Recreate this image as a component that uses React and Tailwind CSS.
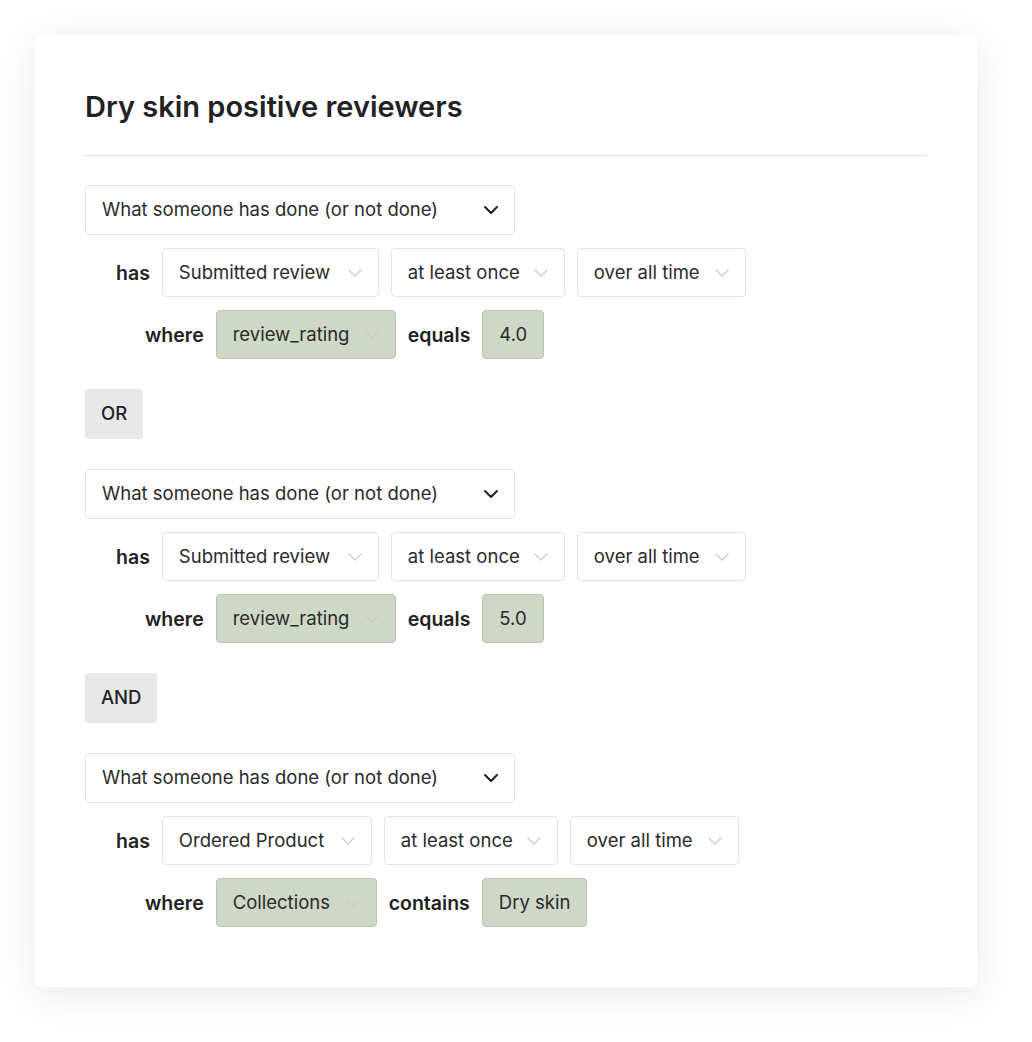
import React from 'react';

function Chevron({ dark }) {
  return (
    <svg
      width="14"
      height="8"
      viewBox="0 0 14 8"
      fill="none"
      stroke={dark ? '#222222' : '#c9ccc9'}
      strokeWidth={dark ? 2 : 1.3}
      strokeLinecap="round"
      strokeLinejoin="round"
    >
      <path d="M1 1l6 6 6-6" />
    </svg>
  );
}

function Select({ label, green, width }) {
  return (
    <div
      className={`flex h-[49px] items-center gap-[14px] rounded-[4px] border pl-4 pr-4 text-[18.5px] text-[#2a2a2a] ${
        green ? 'border-[#bcc4b4] bg-[#cfd7c7]' : 'border-[#e4e4e4] bg-white'
      } ${width}`}
    >
      <span className="flex-1 whitespace-nowrap">{label}</span>
      <Chevron />
    </div>
  );
}

function Value({ label }) {
  return (
    <div className="flex h-[49px] items-center rounded-[4px] border border-[#bcc4b4] bg-[#cfd7c7] px-4 text-[18.5px] text-[#2a2a2a]">
      {label}
    </div>
  );
}

function Label({ children }) {
  return <span className="translate-y-[1px] text-[19.5px] font-semibold text-[#222]">{children}</span>;
}

function Condition({ event, eventWidth, freqWidth, timeWidth, prop, propWidth, op, value }) {
  return (
    <div className="flex flex-col gap-[13px]">
      <div className="flex h-[50px] w-[430px] items-center justify-between rounded-[4px] border border-[#e4e4e4] bg-white pl-4 pr-4 text-[18.5px] text-[#2a2a2a]">
        <span>What someone has done (or not done)</span>
        <Chevron dark />
      </div>
      <div className="ml-[31px] flex items-center gap-3">
        <Label>has</Label>
        <Select label={event} width={eventWidth} />
        <Select label="at least once" width={freqWidth} />
        <Select label="over all time" width={timeWidth} />
      </div>
      <div className="ml-[60px] flex items-center gap-3">
        <Label>where</Label>
        <Select label={prop} green width={propWidth} />
        <Label>{op}</Label>
        <Value label={value} />
      </div>
    </div>
  );
}

function Joiner({ children }) {
  return (
    <div className="flex h-[50px] w-fit items-center rounded-[4px] bg-[#e8e8e8] px-4 text-[18.5px] font-medium text-[#222]">
      {children}
    </div>
  );
}

export default function App() {
  return (
    <div className="min-h-screen bg-white p-[35px] pr-[55px]" style={{ fontFamily: 'Inter, "Liberation Sans", sans-serif' }}>
      <div className="rounded-[6px] bg-white px-[50px] pb-[60px] pt-[54px] shadow-[0_8px_40px_rgba(0,0,0,0.09)]">
        <h1 className="border-b border-[#e6e6e6] pb-[30px] text-[29px] font-semibold leading-[36px] text-[#222]">
          Dry skin positive reviewers
        </h1>
        <div className="mt-[29px] flex flex-col gap-[30px]">
          <Condition
            event="Submitted review"
            eventWidth="w-[217px]"
            freqWidth="w-[174px]"
            timeWidth="w-[169px]"
            prop="review_rating"
            propWidth="w-[180px]"
            op="equals"
            value="4.0"
          />
          <Joiner>OR</Joiner>
          <Condition
            event="Submitted review"
            eventWidth="w-[217px]"
            freqWidth="w-[174px]"
            timeWidth="w-[169px]"
            prop="review_rating"
            propWidth="w-[180px]"
            op="equals"
            value="5.0"
          />
          <Joiner>AND</Joiner>
          <Condition
            event="Ordered Product"
            eventWidth="w-[210px]"
            freqWidth="w-[174px]"
            timeWidth="w-[169px]"
            prop="Collections"
            propWidth="w-[161px]"
            op="contains"
            value="Dry skin"
          />
        </div>
      </div>
    </div>
  );
}
